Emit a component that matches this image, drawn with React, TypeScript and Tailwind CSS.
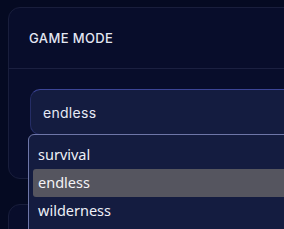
import React from "react";

export default function App() {
  return (
    <div className="relative w-[284px] h-[229px] overflow-hidden bg-[#050a22] pt-[7px] pl-[8px]" style={{ fontFamily: "Inter, 'Noto Sans', sans-serif" }}>
      <div className="w-[400px] h-[172px] rounded-[12px] border border-[#191e3c] bg-[#080d2b]">
        <div className="h-[61px] border-b border-[#1b2040] pl-[20px] pt-[1px] flex items-center">
          <span className="text-[13px] font-medium tracking-[0.03em] text-[#e3e7f3]">GAME MODE</span>
        </div>
        <div className="pt-[20px] pl-[21px]">
          <div className="h-[46px] rounded-[10px] bg-[#141c40] border border-[#252d66] border-t-[#3c4596] flex items-center pl-[12px]">
            <span className="text-[14px] text-[#e6e9f5] tracking-[0.02em]">endless</span>
          </div>
        </div>
      </div>
      <div className="mt-[25px] w-[400px] h-[60px] rounded-[12px] border border-[#191e3c] bg-[#080d2b]" />
      <div
        className="absolute left-[28px] top-[134px] w-[300px] h-[110px] rounded-[6px] border border-[#6e76a8] bg-[#141c40] pt-[6px] px-[4px]"
        style={{ fontFamily: "'Noto Sans', 'Open Sans', sans-serif" }}
      >
        <div className="h-[28px] flex items-center pl-[5px] text-[14.5px] text-[#eef0f7]">survival</div>
        <div className="h-[28px] flex items-center pl-[5px] text-[14.5px] text-[#f3f3f6] bg-[#55555f] rounded-[3px]">endless</div>
        <div className="h-[28px] flex items-center pl-[5px] text-[14.5px] text-[#eef0f7]">wilderness</div>
      </div>
    </div>
  );
}
